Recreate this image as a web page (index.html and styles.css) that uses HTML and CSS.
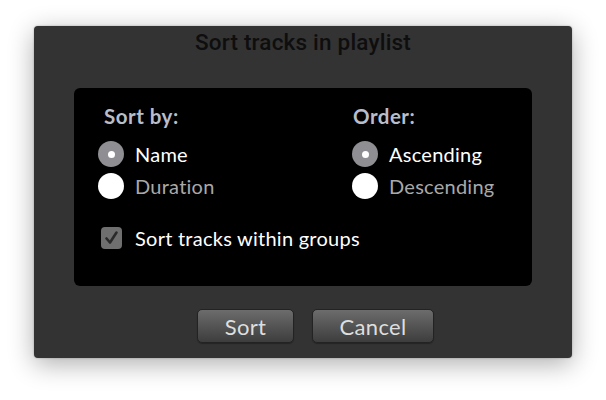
FILE: index.html
```html
<!DOCTYPE html>
<html>
<head>
<meta charset="utf-8">
<link rel="stylesheet" href="styles.css">
</head>
<body>
<div class="window">
  <div class="title">Sort tracks in playlist</div>
  <div class="panel">
    <div class="cols">
      <div class="col">
        <div class="head first">Sort by:</div>
        <div class="opt"><span class="radio on"></span><span class="lbl on">Name</span></div>
        <div class="opt"><span class="radio"></span><span class="lbl">Duration</span></div>
      </div>
      <div class="col">
        <div class="head">Order:</div>
        <div class="opt"><span class="radio on"></span><span class="lbl on">Ascending</span></div>
        <div class="opt"><span class="radio"></span><span class="lbl">Descending</span></div>
      </div>
    </div>
    <div class="check-row">
      <span class="check"><svg width="21" height="22" viewBox="0 0 21 22"><path d="M5.5 11.5 L9 15.5 L15.5 5.5" fill="none" stroke="#2a2a2a" stroke-width="2.6" stroke-linecap="round" stroke-linejoin="round"/></svg></span>
      <span class="lbl on">Sort tracks within groups</span>
    </div>
  </div>
  <div class="buttons">
    <button class="btn sort">Sort</button>
    <button class="btn cancel">Cancel</button>
  </div>
</div>
</body>
</html>
```
FILE: styles.css
```css
html, body {
  margin: 0;
  padding: 0;
  background: #ffffff;
}
body {
  width: 606px;
  height: 400px;
  overflow: hidden;
}
.window {
  margin: 26px 0 0 34px;
  width: 538px;
  height: 332px;
  box-sizing: border-box;
  background: #333333;
  border-radius: 4px;
  box-shadow: 0 6px 26px rgba(0, 0, 0, 0.32), 0 0 2px rgba(0,0,0,0.3);
  display: flex;
  flex-direction: column;
}
.title {
  font-family: "Roboto", "Liberation Sans", Arial, sans-serif;
  font-weight: 500;
  font-size: 22.5px;
  line-height: 26px;
  height: 26px;
  padding-top: 3px;
  text-align: center;
  color: #0e0e0e;
  letter-spacing: 0.2px;
}
.panel {
  margin: 33px 0 0 40px;
  width: 458px;
  height: 198px;
  box-sizing: border-box;
  background: #000000;
  border-radius: 6px;
  padding: 16px 24px 0 24px;
  font-family: "Lato", "Open Sans", sans-serif;
}
.cols {
  display: grid;
  grid-template-columns: 254px 1fr;
}
.col {
  display: flex;
  flex-direction: column;
}
.head {
  height: 24px;
  line-height: 24px;
  padding-left: 1px;
  font-size: 20.5px;
  font-weight: 700;
  color: #b9bdca;
  letter-spacing: 0.5px;
  margin-bottom: 10px;
}
.head.first {
  padding-left: 6px;
}
.opt {
  height: 32px;
  display: flex;
  align-items: center;
  gap: 11px;
}
.radio {
  width: 26px;
  height: 26px;
  border-radius: 50%;
  background: #ffffff;
  box-sizing: border-box;
  display: flex;
  align-items: center;
  justify-content: center;
}
.radio.on {
  background: #8e8e93;
}
.radio.on::after {
  content: "";
  width: 7px;
  height: 7px;
  border-radius: 50%;
  background: #ffffff;
}
.lbl {
  font-size: 20px;
  letter-spacing: 0.25px;
  color: #a9a9a9;
}
.lbl.on {
  color: #ffffff;
}
.check-row {
  margin-top: 24px;
  height: 24px;
  display: flex;
  align-items: center;
  padding-left: 3px;
  gap: 13px;
}
.check {
  width: 21px;
  height: 22px;
  border-radius: 4px;
  background: #6f6f6f;
  display: block;
}
.check svg {
  display: block;
}
.buttons {
  margin: 23px 0 0 163px;
  display: flex;
  gap: 18px;
}
.btn {
  height: 34px;
  box-sizing: border-box;
  border: 1px solid #232323;
  border-radius: 5px;
  background: linear-gradient(#6c6c6c, #3d3d3d);
  color: #dedede;
  font-family: "Lato", "Open Sans", sans-serif;
  font-size: 22px;
  letter-spacing: 0.3px;
  padding: 0;
  box-shadow: 0 1px 1px rgba(0,0,0,0.3);
}
.sort { width: 97px; }
.cancel { width: 122px; }
```
